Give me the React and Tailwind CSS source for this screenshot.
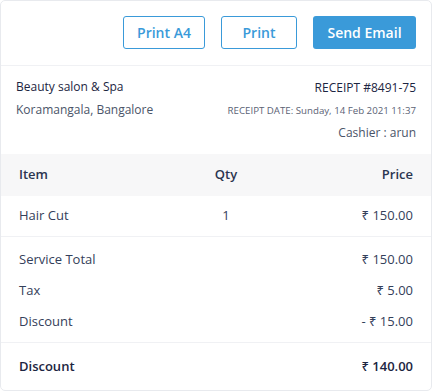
export default function App() {
  const font = { fontFamily: '"Open Sans", "Noto Sans", sans-serif' };
  return (
    <div className="bg-white w-[433px] h-[392px]" style={font}>
      <div className="w-[432px] border border-[#e8eaee] rounded-[5px] bg-white">
        <div className="flex justify-end gap-4 px-[15px] pt-[15px] pb-4 border-b border-[#f0f1f4]">
          <button className="w-[82px] h-[33px] border border-[#3a9ad9] rounded-[3px] text-[#3a9ad9] text-[14px] font-semibold">Print A4</button>
          <button className="w-[76px] h-[33px] border border-[#3a9ad9] rounded-[3px] text-[#3a9ad9] text-[14px] font-semibold">Print</button>
          <button className="w-[103px] h-[33px] bg-[#3a9ad9] rounded-[3px] text-white text-[14px] font-semibold">Send Email</button>
        </div>
        <div className="flex justify-between px-[15px] pt-[13px] h-[88px]">
          <div className="flex flex-col">
            <div className="text-[12px] leading-[16px] font-medium text-[#1c2541]">Beauty salon &amp; Spa</div>
            <div className="text-[12px] leading-[16px] text-[#4a5468] mt-[7px]">Koramangala, Bangalore</div>
          </div>
          <div className="flex flex-col items-end">
            <div className="text-[12px] leading-[16px] font-medium text-[#1c2541] mt-[1px]">RECEIPT #8491-75</div>
            <div className="text-[9.7px] leading-[14px] text-[#5a6274] mt-[8px]">RECEIPT DATE: Sunday, 14 Feb 2021 11:37</div>
            <div className="text-[12px] leading-[16px] text-[#4a5468] mt-[7px]">Cashier : arun</div>
          </div>
        </div>
        <div className="grid grid-cols-[182px_50px_1fr] items-center px-[18px] h-[42px] bg-[#f7f7f8] text-[13px] font-[550] text-[#2b3550]">
          <div>Item</div>
          <div className="text-center">Qty</div>
          <div className="text-right">Price</div>
        </div>
        <div className="grid grid-cols-[182px_50px_1fr] items-center px-[18px] h-[41px] border-b border-[#f0f1f4] text-[13px] text-[#34405a]">
          <div>Hair Cut</div>
          <div className="text-center">1</div>
          <div className="text-right">₹ 150.00</div>
        </div>
        <div className="flex flex-col px-[18px] pt-[7px] pb-[5px] border-b border-[#f0f1f4] text-[13px] text-[#34405a]">
          <div className="flex justify-between items-center h-[31px]"><span>Service Total</span><span>₹ 150.00</span></div>
          <div className="flex justify-between items-center h-[31px]"><span>Tax</span><span>₹ 5.00</span></div>
          <div className="flex justify-between items-center h-[31px]"><span>Discount</span><span>- ₹ 15.00</span></div>
        </div>
        <div className="flex justify-between items-center px-[18px] h-[47px] text-[13px] font-[550] text-[#1c2541]">
          <span>Discount</span><span>₹ 140.00</span>
        </div>
      </div>
    </div>
  );
}
